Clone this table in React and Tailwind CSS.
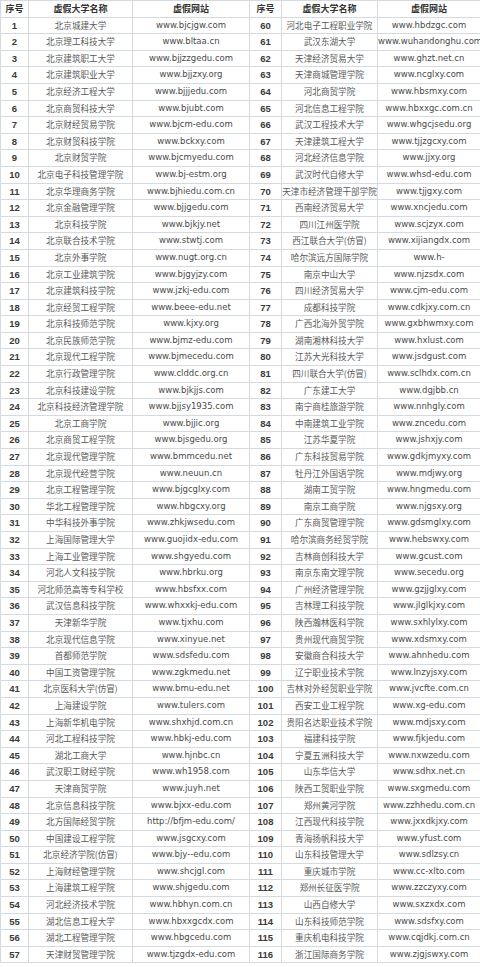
import React from "react";

const left = [
  ["1", "北京城建大学", "www.bjcjgw.com"],
  ["2", "北京理工科技大学", "www.bltaa.cn"],
  ["3", "北京建筑职工大学", "www.bjjzzgedu.com"],
  ["4", "北京建筑职业大学", "www.bjjzxy.org"],
  ["5", "北京经济工程大学", "www.bjjjedu.com"],
  ["6", "北京商贸科技大学", "www.bjubt.com"],
  ["7", "北京财经贸易学院", "www.bjcm-edu.com"],
  ["8", "北京财贸科技学院", "www.bckxy.com"],
  ["9", "北京财贸学院", "www.bjcmyedu.com"],
  ["10", "北京电子科技管理学院", "www.bj-estm.org"],
  ["11", "北京华理商务学院", "www.bjhiedu.com.cn"],
  ["12", "北京金融管理学院", "www.bjjgedu.com"],
  ["13", "北京科技学院", "www.bjkjy.net"],
  ["14", "北京联合技术学院", "www.stwtj.com"],
  ["15", "北京外事学院", "www.nugt.org.cn"],
  ["16", "北京工业建筑学院", "www.bjgyjzy.com"],
  ["17", "北京建筑科技学院", "www.jzkj-edu.com"],
  ["18", "北京经贸工程学院", "www.beee-edu.net"],
  ["19", "北京科技师范学院", "www.kjxy.org"],
  ["20", "北京民族师范学院", "www.bjmz-edu.com"],
  ["21", "北京现代工程学院", "www.bjmecedu.com"],
  ["22", "北京行政管理学院", "www.clddc.org.cn"],
  ["23", "北京科技建设学院", "www.bjkjjs.com"],
  ["24", "北京科技经济管理学院", "www.bjjsy1935.com"],
  ["25", "北京工商学院", "www.bjjic.org"],
  ["26", "北京商贸工程学院", "www.bjsgedu.org"],
  ["27", "北京现代管理学院", "www.bmmcedu.net"],
  ["28", "北京现代经营学院", "www.neuun.cn"],
  ["29", "北京工程管理学院", "www.bjgcglxy.com"],
  ["30", "华北工程管理学院", "www.hbgcxy.org"],
  ["31", "中华科技外事学院", "www.zhkjwsedu.com"],
  ["32", "上海国际管理大学", "www.guojidx-edu.com"],
  ["33", "上海工业管理学院", "www.shgyedu.com"],
  ["34", "河北人文科技学院", "www.hbrku.org"],
  ["35", "河北师范高等专科学校", "www.hbsfxx.com"],
  ["36", "武汉信息科技学院", "www.whxxkj-edu.com"],
  ["37", "天津新华学院", "www.tjxhu.com"],
  ["38", "北京现代信息学院", "www.xinyue.net"],
  ["39", "首都师范学院", "www.sdsfedu.com"],
  ["40", "中国工资管理学院", "www.zgkmedu.net"],
  ["41", "北京医科大学(仿冒)", "www.bmu-edu.net"],
  ["42", "上海建设学院", "www.tulers.com"],
  ["43", "上海新华机电学院", "www.shxhjd.com.cn"],
  ["44", "河北工程科技学院", "www.hbkj-edu.com"],
  ["45", "湖北工商大学", "www.hjnbc.cn"],
  ["46", "武汉职工财经学院", "www.wh1958.com"],
  ["47", "天津商贸学院", "www.juyh.net"],
  ["48", "北京信息科技学院", "www.bjxx-edu.com"],
  ["49", "北方国际经贸学院", "http://bfjm-edu.com/"],
  ["50", "中国建设工程学院", "www.jsgcxy.com"],
  ["51", "北京经济学院(仿冒)", "www.bjy--edu.com"],
  ["52", "上海财经管理学院", "www.shcjgl.com"],
  ["53", "上海建筑工程学院", "www.shjgedu.com"],
  ["54", "河北经济技术学院", "www.hbhyn.com.cn"],
  ["55", "湖北信息工程大学", "www.hbxxgcdx.com"],
  ["56", "湖北工程管理学院", "www.hbgcedu.com"],
  ["57", "天津财贸管理学院", "www.tjzgdx-edu.com"],
];

const right = [
  ["60", "河北电子工程职业学院", "www.hbdzgc.com"],
  ["61", "武汉东湖大学", "www.wuhandonghu.com"],
  ["62", "天津经济贸易大学", "www.ghzt.net.cn"],
  ["63", "天津商城管理学院", "www.ncglxy.com"],
  ["64", "河北商贸学院", "www.hbsmxy.com"],
  ["65", "河北信息工程学院", "www.hbxxgc.com.cn"],
  ["66", "武汉工程技术大学", "www.whgcjsedu.org"],
  ["67", "天津建筑工程大学", "www.tjjzgcxy.com"],
  ["68", "河北经济信息学院", "www.jjxy.org"],
  ["69", "武汉时代自修大学", "www.whsd-edu.com"],
  ["70", "天津市经济管理干部学院", "www.tjjgxy.com"],
  ["71", "西南经济贸易大学", "www.xncjedu.com"],
  ["72", "四川江州医学院", "www.scjzyx.com"],
  ["73", "西江联合大学(仿冒)", "www.xijiangdx.com"],
  ["74", "哈尔滨远方国际学院", "www.h-"],
  ["75", "南京中山大学", "www.njzsdx.com"],
  ["76", "四川经济贸易大学", "www.cjm-edu.com"],
  ["77", "成都科技学院", "www.cdkjxy.com.cn"],
  ["78", "广西北海外贸学院", "www.gxbhwmxy.com"],
  ["79", "湖南湘林科技大学", "www.hxlust.com"],
  ["80", "江苏大光科技大学", "www.jsdgust.com"],
  ["81", "四川联合大学(仿冒)", "www.sclhdx.com.cn"],
  ["82", "广东建工大学", "www.dgjbb.cn"],
  ["83", "南宁商桂旅游学院", "www.nnhgly.com"],
  ["84", "中南建筑工业学院", "www.zncedu.com"],
  ["85", "江苏华夏学院", "www.jshxjy.com"],
  ["86", "广东科技贸易学院", "www.gdkjmyxy.com"],
  ["87", "牡丹江外国语学院", "www.mdjwy.org"],
  ["88", "湖南工贸学院", "www.hngmedu.com"],
  ["89", "南京工商学院", "www.njgsxy.org"],
  ["90", "广东商贸管理学院", "www.gdsmglxy.com"],
  ["91", "哈尔滨商务经贸学院", "www.hebswxy.com"],
  ["92", "吉林商创科技大学", "www.gcust.com"],
  ["93", "南京东南文理学院", "www.secedu.org"],
  ["94", "广州经济管理学院", "www.gzjjglxy.com"],
  ["95", "吉林理工科技学院", "www.jlglkjxy.com"],
  ["96", "陕西瀚林医科学院", "www.sxhlylxy.com"],
  ["97", "贵州现代商贸学院", "www.xdsmxy.com"],
  ["98", "安徽商合科技大学", "www.ahnhedu.com"],
  ["99", "辽宁职业技术学院", "www.lnzyjsxy.com"],
  ["100", "吉林对外经贸职业学院", "www.jvcfte.com.cn"],
  ["101", "西安工业工程学院", "www.xg-edu.com"],
  ["102", "贵阳名达职业技术学院", "www.mdjsxy.com"],
  ["103", "福建科技学院", "www.fjkjedu.com"],
  ["104", "宁夏五洲科技大学", "www.nxwzedu.com"],
  ["105", "山东华信大学", "www.sdhx.net.cn"],
  ["106", "陕西工贸职业学院", "www.sxgmedu.com"],
  ["107", "郑州黄河学院", "www.zzhhedu.com.cn"],
  ["108", "江西现代科技学院", "www.jxxdkjxy.com"],
  ["109", "青海扬帆科技大学", "www.yfust.com"],
  ["110", "山东科技管理大学", "www.sdlzsy.cn"],
  ["111", "重庆城市学院", "www.cc-xlto.com"],
  ["112", "郑州长征医学院", "www.zzczyxy.com"],
  ["113", "山西自修大学", "www.sxzxdx.com"],
  ["114", "山东科技师范学院", "www.sdsfxy.com"],
  ["115", "重庆机电科技学院", "www.cqjdkj.com.cn"],
  ["116", "浙江国际商务学院", "www.zjgjswxy.com"],
];

const cell =
  "border-r border-b border-[#d4dae0] overflow-hidden whitespace-nowrap text-center leading-[15.6px]";
const num = `${cell} font-['Liberation_Sans',sans-serif] font-bold text-[9.5px] text-[#3a3a3a]`;
const name = `${cell} font-['Noto_Sans_CJK_SC',sans-serif] text-[8.6px] text-[#5a5a5a]`;
const site = `${cell} font-['DejaVu_Sans',sans-serif] text-[8.5px] text-[#4a4a4a]`;
const head = `${cell} font-['Noto_Sans_CJK_SC',sans-serif] font-bold text-[9px] text-[#333333]`;

export default function App() {
  return (
    <div className="w-[480px] h-[967px] overflow-hidden bg-white">
      <div className="grid grid-cols-[28px_104px_117px_32px_96px_103px] auto-rows-[16.6px] border-l border-t border-[#d4dae0]">
        <div className={head}>序号</div>
        <div className={head}>虚假大学名称</div>
        <div className={head}>虚假网站</div>
        <div className={head}>序号</div>
        <div className={head}>虚假大学名称</div>
        <div className={head}>虚假网站</div>
        {left.map((l, i) => {
          const r = right[i];
          return (
            <React.Fragment key={i}>
              <div className={num}>{l[0]}</div>
              <div className={name}>{l[1]}</div>
              <div className={site}>{l[2]}</div>
              <div className={num}>{r[0]}</div>
              <div className={name}>{r[1]}</div>
              <div className={site}>{r[2]}</div>
            </React.Fragment>
          );
        })}
      </div>
    </div>
  );
}
